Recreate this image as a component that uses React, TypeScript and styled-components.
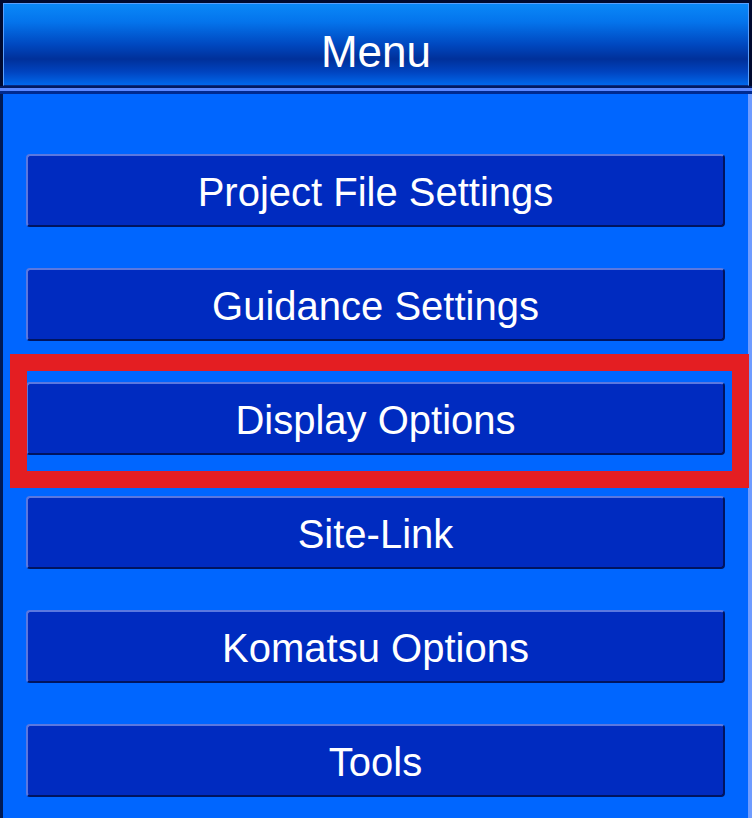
import React from 'react';
import styled, { createGlobalStyle } from 'styled-components';

const GlobalStyle = createGlobalStyle`
  html, body {
    margin: 0;
    padding: 0;
    background: #0066ff;
  }
  body {
    font-family: "Liberation Sans", Arial, sans-serif;
  }
`;

const Screen = styled.div`
  width: 752px;
  height: 818px;
  display: flex;
  flex-direction: column;
  background: #0066ff;
  overflow: hidden;
`;

const HeaderBar = styled.header`
  height: 94px;
  box-sizing: border-box;
  display: flex;
  flex-direction: column;
  background: #000a30;
  padding-top: 3px;
`;

const TitleBox = styled.div`
  height: 83px;
  box-sizing: border-box;
  margin: 0 3px;
  border: 1px solid #5aa0ff;
  border-bottom-color: #0a2a80;
  background: linear-gradient(
    to bottom,
    #0a88f8 0%,
    #0474ec 22%,
    #0048c0 50%,
    #00309a 68%,
    #0044c0 84%,
    #0068ec 100%
  );
  display: flex;
  align-items: center;
  justify-content: center;
  color: #ffffff;
  font-size: 44px;
  padding-top: 14px;
`;

const HeaderRule = styled.div`
  height: 8px;
  background: linear-gradient(
    to bottom,
    #001a60 0px,
    #001a60 2px,
    #5a88ff 2px,
    #5a88ff 5px,
    #002a90 5px,
    #002a90 8px
  );
`;

const Body = styled.main`
  flex: 1;
  display: flex;
  flex-direction: column;
  gap: 41px;
  padding: 60px 23px 0;
  border-left: 3px solid #001a55;
  border-right: 4px solid #6e9cff;
`;

const ItemSlot = styled.div`
  position: relative;
`;

const MenuButton = styled.button`
  width: 100%;
  height: 73px;
  box-sizing: border-box;
  background: #002bc0;
  border: 2px solid #5a78e0;
  border-right-color: #001460;
  border-bottom-color: #001460;
  border-radius: 4px;
  color: #ffffff;
  font-family: "Liberation Sans", Arial, sans-serif;
  font-size: 40px;
  padding: 4px 0 0;
  cursor: pointer;
`;

const Highlight = styled.div`
  position: absolute;
  left: -16px;
  top: -28px;
  right: -24px;
  bottom: -33px;
  border: 17px solid #e41e22;
  pointer-events: none;
`;

const items = [
  'Project File Settings',
  'Guidance Settings',
  'Display Options',
  'Site-Link',
  'Komatsu Options',
  'Tools',
];

export default function App() {
  const selected = 'Display Options';
  return (
    <>
      <GlobalStyle />
      <Screen>
        <HeaderBar>
          <TitleBox>Menu</TitleBox>
          <HeaderRule />
        </HeaderBar>
        <Body>
          {items.map((label) => (
            <ItemSlot key={label}>
              <MenuButton>{label}</MenuButton>
              {label === selected && <Highlight />}
            </ItemSlot>
          ))}
        </Body>
      </Screen>
    </>
  );
}
